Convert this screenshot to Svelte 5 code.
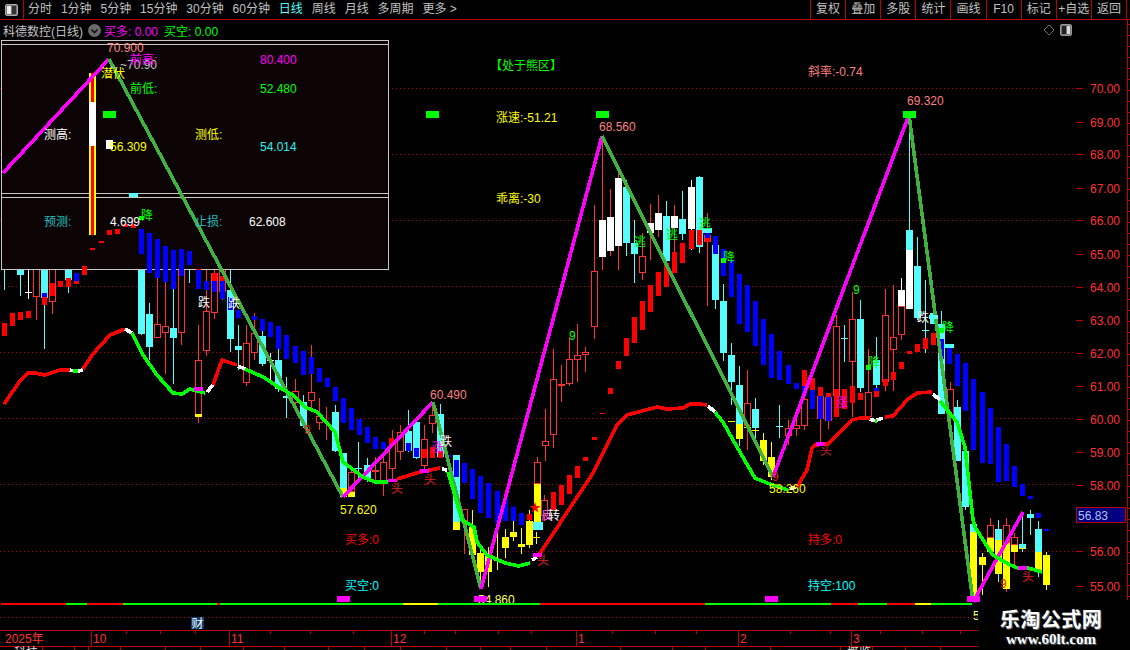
<script>
  const menu = [['分时'],['1分钟'],['5分钟'],['15分钟'],['30分钟'],['60分钟'],['日线',true],['周线'],['月线'],['多周期'],['更多 >']];
  const tools = ['复权','叠加','多股','统计','画线','F10','标记','+自选','返回'];
  const dots = [88,154,220,286,352,418,484,551,617];
  const RED='#ff0000', BLU='#0000ff', GRN='#00ff00';
  const kinds = { h:{s:'#ff3232',f:'#000',w:'#ff3232'}, c:{s:'#54fcfc',f:'#54fcfc',w:'#54fcfc'}, w:{s:'#fff',f:'#fff',w:'#ff3232'}, W:{s:'#fff',f:'#fff',w:'#fff'}, y:{s:'#ffff00',f:'#ffff00',w:'#ffff00'} };
  // left, high, low, bodyTop, bodyBottom, kind
  const candles = [
    [1,250,290,255,260,'c'],[17,250,296,262,275,'c'],[25,250,299,292,293,'W'],[33,250,320,255,297,'h'],[41,250,349,255,298,'c'],[49,250,314,255,302,'h'],[65,250,293,255,280,'c'],
    [138,260,335,262,334,'c'],[146,303,360,314,347,'c'],[154,262,338,324,338,'h'],[162,262,374,326,333,'h'],[170,262,384,328,338,'c'],[178,262,345,262,333,'h'],[186,262,283,262,265,'c'],
    [195,325,423,360,417,'h'],[203,262,356,311,351,'h'],[211,262,319,273,313,'h'],[219,262,300,262,292,'h'],[227,262,352,290,339,'c'],[235,325,370,346,350,'c'],[243,325,386,343,383,'h'],[251,313,360,333,353,'h'],[259,330,366,336,364,'c'],[267,353,383,360,361,'W'],[275,345,392,360,389,'c'],[283,377,418,396,398,'c'],[292,379,404,391,403,'h'],[300,395,428,402,426,'c'],[308,345,410,392,401,'h'],[316,398,430,416,423,'h'],[323,407,440,416,417,'h'],[332,405,452,412,451,'c'],[340,453,488,453,488,'c'],[348,466,492,472,492,'h'],[355,442,483,468,469,'c'],[364,458,482,465,480,'c'],[372,457,480,470,472,'h'],[380,455,496,462,482,'h'],[389,430,480,440,469,'h'],[397,425,460,432,452,'h'],
    [405,410,452,431,451,'c'],[413,425,459,422,458,'c'],[421,425,470,439,466,'h'],[429,402,433,415,424,'h'],[437,404,458,414,457,'c'],[453,455,530,455,522,'c'],[461,509,554,509,521,'h'],
    [469,510,556,527,555,'y'],[477,547,587,553,572,'y'],[485,547,587,553,572,'y'],[494,534,570,559,561,'y'],[502,529,558,537,548,'y'],[510,520,541,532,537,'y'],[518,528,554,544,547,'y'],[526,510,548,521,545,'y'],[534,457,484,462,484,'h'],[534,484,522,484,522,'y'],[533,532,544,537,538,'y'],
    [541,495,520,500,516,'h'],
    [542,409,461,441,446,'h'],[550,349,448,379,435,'h'],[558,365,402,384,386,'h'],[566,337,386,359,384,'h'],[574,324,382,355,360,'h'],[582,347,372,352,355,'h'],[591,205,339,271,327,'h'],
    [599,137,270,220,257,'w'],[607,189,256,217,251,'w'],[615,172,270,178,246,'w'],[623,180,256,187,243,'c'],[631,220,283,243,254,'c'],[639,233,280,256,273,'h'],[647,204,260,223,233,'w'],[655,195,237,213,230,'w'],[663,201,275,216,261,'c'],[671,205,270,216,228,'w'],[679,191,240,219,234,'c'],[688,180,250,187,229,'W'],[696,176,253,177,247,'c'],[704,213,306,235,242,'h'],
    [712,240,309,245,300,'c'],[720,284,361,301,353,'c'],[728,343,405,355,382,'c'],[736,366,446,385,424,'c'],[744,370,450,403,426,'h'],[752,398,440,409,428,'c'],[760,433,465,440,461,'y'],[768,442,480,457,477,'y'],[776,405,438,426,427,'c'],[785,420,445,428,436,'h'],[793,419,436,425,429,'h'],[801,375,430,399,426,'h'],[817,390,443,396,419,'h'],[825,395,429,397,421,'h'],[833,315,417,326,396,'h'],[841,325,362,338,339,'c'],[849,292,417,319,362,'h'],[857,300,392,319,388,'c'],[865,349,420,392,417,'h'],[873,337,392,360,385,'c'],[882,289,391,315,382,'h'],[890,285,391,337,350,'h'],[898,278,340,306,335,'h'],[898,278,306,290,306,'W'],[906,115,309,230,309,'c'],[914,237,320,266,318,'c'],[922,280,353,330,331,'c'],[930,313,324,313,324,'c'],[938,311,414,324,414,'c'],[947,382,415,389,415,'h'],[954,400,461,407,461,'c'],[962,451,510,451,507,'c'],
    [970,520,600,524,599,'c'],[979,553,595,557,565,'y'],[987,518,555,525,538,'h'],[995,520,582,529,540,'c'],[1003,518,592,525,543,'h'],[1011,533,567,537,545,'h'],[1019,513,552,544,548,'c'],[1027,510,535,514,518,'c'],[1035,521,577,529,552,'c'],[1043,552,590,555,585,'y']
  ];
  // left, top, bottom, color, width (overpaint on candles, under the ribbon blocks)
  const fills = [
    [970,532,599,'#ffff00',7],[987,538,552,'#ffff00',7],[995,540,574,'#ffff00',7],[1003,543,589,'#ffff00',7],[1011,545,552,'#ffff00',7],[1035,552,572,'#ffff00',7],[1019,548,549,'#ffff00',7],
    [736,424,439,'#ffff00',7],[728,421,422,'#ffff00',7],[744,427,428,'#ffff00',7],[752,430,431,'#ffff00',7],[340,488,497,'#ffff00',7],[348,492,497,'#ffff00',7],[453,522,530,'#ffff00',7],
    [461,521,522,'#ffff00',7],[533,522,530,'#54fcfc',10],[195,414,417,'#ffff00',7],[697,230,245,RED,5],[705,236,242,RED,5],[906,250,309,'#fff',7]
  ];
  const blocks = [
    [2,323,336,RED],[10,313,326,RED],[18,312,320,RED],[26,311,318,RED],[42,293,297,BLU],[42,297,305,RED],[50,283,296,RED],[58,281,287,RED],[66,278,287,RED],[74,273,281,BLU],[74,281,284,RED],[82,266,275,RED],[90,248,250,RED],[99,241,243,RED],[107,230,235,RED],[115,229,234,RED],[123,224,227,RED],[131,224,228,RED],[139,216,220,GRN],
    [139,229,254,BLU],[147,233,273,BLU],[155,239,278,BLU],[163,246,282,BLU],[171,250,289,BLU],[179,249,276,BLU],[187,251,265,BLU],[196,270,289,BLU],[196,269,270,RED],[204,281,290,BLU],[212,273,281,RED],[212,281,292,BLU],[220,276,281,RED],[220,281,299,BLU],[228,297,310,BLU],[236,310,318,BLU],[244,317,318,BLU],[252,316,320,BLU],[260,319,331,BLU],[268,322,337,BLU],[276,326,349,BLU],[284,335,359,BLU],[293,346,363,BLU],[301,351,375,BLU],[309,357,374,BLU],[317,368,382,BLU],[325,378,387,BLU],[333,387,401,BLU],[341,398,423,BLU],[349,408,430,BLU],[357,419,435,BLU],[365,427,443,BLU],[373,437,449,BLU],[381,442,449,BLU],[389,438,445,RED],[406,443,451,BLU],[414,448,457,BLU],[422,449,458,RED],[430,447,458,RED],[438,451,458,RED],[446,455,457,BLU],
    [454,460,477,BLU],[462,463,483,BLU],[470,469,499,BLU],[478,476,513,BLU],[486,483,518,BLU],[495,491,523,BLU],[503,500,521,BLU],[511,507,521,BLU],[519,513,525,BLU],[527,514,520,RED],
    [551,492,510,RED],[559,485,505,RED],[567,475,494,RED],[575,466,478,RED],[583,457,461,RED],[592,437,440,RED],[600,413,414,RED],[608,388,394,RED],[616,361,369,RED],[624,338,356,RED],[632,317,343,RED],[640,301,330,RED],[648,285,312,RED],[656,272,296,RED],[664,263,287,RED],[672,252,273,RED],[680,243,263,RED],[689,230,249,RED],
    [705,233,238,BLU],[713,236,254,BLU],[721,249,276,BLU],[721,258,263,GRN],[729,260,297,BLU],[737,274,324,BLU],[745,285,332,BLU],[753,301,346,BLU],[761,319,365,BLU],[769,334,378,BLU],[777,351,380,BLU],[786,365,384,BLU],[794,383,389,BLU],[802,370,386,RED],[802,386,396,BLU],[810,378,390,RED],[810,390,409,BLU],[818,387,396,RED],[818,396,419,BLU],[826,393,397,RED],[826,397,421,BLU],[834,389,417,RED],[842,389,409,RED],[850,386,403,RED],[858,393,400,RED],[866,365,370,GRN],[874,388,391,BLU],[874,391,397,RED],[883,379,386,RED],[891,372,380,RED],[899,362,369,RED],[907,351,354,RED],[915,344,352,RED],[923,338,349,RED],[931,333,345,RED],[939,328,333,GRN],
    [939,339,359,BLU],[947,344,364,BLU],[955,354,386,BLU],[963,363,411,BLU],[971,379,450,BLU],[980,392,463,BLU],[988,408,464,BLU],[996,427,482,BLU],[1004,444,481,BLU],[1012,466,487,BLU],[1020,484,496,BLU],[1028,496,499,BLU],[1036,513,518,BLU],[1044,529,531,BLU]
  ];
  const flats = [
    [129,193,9,4,'#54fcfc'],[703,228,9,5,'#54fcfc'],[929,315,9,4,'#54fcfc'],[945,344,9,4,'#54fcfc'],
    [103,111,13,7,GRN],[426,111,13,7,GRN],[596,111,13,7,GRN],[903,111,13,7,GRN],
    [194,387,9,4,'#ff00ff'],[388,479,9,3,'#ff00ff'],[420,469,9,4,'#ff00ff'],[533,553,9,4,'#ff00ff'],[816,442,9,4,'#ff00ff'],[1018,566,9,4,'#ff00ff'],
    [337,596,13,6,'#ff00ff'],[474,596,13,6,'#ff00ff'],[765,596,13,6,'#ff00ff'],[967,596,13,6,'#ff00ff'],
    [106,140,7,9,'#fff']
  ];
  const zig = [
    ['#ff00ff','3,173 109,59'],['#3fb23f','109,59 343,497'],['#ff00ff','343,497 433,402'],['#3fb23f','433,402 481,589'],['#ff00ff','481,589 602,136'],['#3fb23f','602,136 773,477'],['#ff00ff','773,477 909,115'],['#3fb23f','909,115 973,602'],['#ff00ff','973,602 1023,512']
  ];
  const curve = [
    [RED,'4,404 20,381 28,373 35,373 45,375 60,370 70,370'],['#fff','70,370 73,371'],[GRN,'73,371 78,371'],['#fff','78,371 83,370'],
    [RED,'83,369 92,355 110,335 125,329'],['#fff','125,329 132,333'],[GRN,'132,333 143,355 157,375 173,393 182,394 190,389 205,393'],['#fff','207,392 213,385'],
    [RED,'213,385 222,360 237,365'],['#fff','238,366 245,369'],[GRN,'245,369 263,377 280,388 293,395 305,407 317,412 335,432 343,462 363,477 375,482 388,482'],
    [RED,'397,479 420,472 440,468'],['#fff','442,469 447,470'],[GRN,'448,472 462,520 474,527 477,542 487,555 505,563 519,566 530,563'],['#fff','532,560 537,557'],
    [RED,'539,555 562,520 593,473 617,425 627,415 657,407 667,409 683,408 690,404 700,404 707,405'],['#fff','708,406 715,412'],[GRN,'715,412 723,422 737,447 755,478 767,483 788,490'],['#fff','790,489 795,487'],
    [RED,'797,487 807,470 812,448 815,445 828,444 852,420 860,418 870,418'],['#fff','870,419 875,421'],[GRN,'875,421 877,421'],['#fff','877,420 883,418'],
    [RED,'885,417 893,416 907,400 917,393 932,392'],['#fff','933,394 940,400'],[GRN,'940,401 957,422 965,447 973,520 975,527 985,543 993,555 1010,565 1018,568 1028,568 1042,572']
  ];
  const base = [[1,66,RED],[66,87,GRN],[87,123,RED],[123,217,GRN],[217,220,RED],[220,403,GRN],[403,438,'#ffff00'],[438,540,GRN],[540,705,RED],[705,831,GRN],[831,858,RED],[858,887,GRN],[887,915,RED],[915,931,'#ffff00'],[931,972,GRN]];
  // x, center y, text, color
  const under = [[478,599,'54.860','#ffff66'],[973,615,'55.120','#ffff66']];
  const panelText = [
    [107,47,'70.900','#ff8c8c'],[108,64,'←~70.90','#c8c8c8'],[130,59,'前高:','#ff00ff'],[260,59,'80.400','#ff00ff'],
    [101,73,'潜伏','#ffff00'],[130,88,'前低:',GRN],[260,88,'52.480',GRN],
    [44,134,'测高:','#fff'],[195,134,'测低:','#ffff00'],[110,146,'56.309','#ffff00'],[260,146,'54.014','#2cf0f0'],
    [44,221,'预测:','#1fc0c0'],[110,221,'4.699','#fff'],[195,221,'止损:','#1fc0c0'],[249,221,'62.608','#fff']
  ];
  const labels = [
    [490,65,'【处于熊区】',GRN],[496,117,'涨速:-51.21','#ffff00'],[496,198,'乖离:-30','#ffff00'],[808,71,'斜率:-0.74','#ff8080'],
    [430,394,'60.490','#ff8080'],[599,126,'68.560','#ff8080'],[907,100,'69.320','#ff8080'],[340,509,'57.620','#ffff00'],[769,488,'58.260','#ffff00'],
    [345,539,'买多:0','#ff0000'],[345,585,'买空:0','#00ffff'],[808,539,'持多:0','#ff0000'],[808,585,'持空:100','#00ffff'],
    [198,302,'跌','#fff'],[228,303,'跌','#fff'],[432,447,'涨','#ff00ff'],[440,441,'跌','#fff'],[836,402,'涨','#ff00ff'],[917,317,'跌','#fff'],
    [141,215,'降',GRN],[723,257,'降',GRN],[868,362,'降',GRN],[942,327,'降',GRN],[634,241,'逃',GRN],[666,234,'逃',GRN],[699,223,'逃',GRN],
    [569,335,'9',GRN],[853,289,'9',GRN],[304,429,'9','#e02020'],[772,476,'9','#e02020'],[1000,583,'9','#e02020'],
    [391,488,'头','#e02020'],[424,479,'头','#e02020'],[537,560,'头','#e02020'],[820,450,'头','#c02020'],[1022,576,'头','#e02020'],
    [529,507,'★','#ff0000'],[541,515,'反','#ff60ff'],[548,515,'转','#fff']
  ];
  const prices = [[70,88],[69,122],[68,154],[67,188],[66,220],[65,254],[64,287],[63,320],[62,353],[61,386],[60,419],[59,452],[58,485],[56,551],[55,586]];
  const minor = Array.from({length:53},(_,i)=>24+i*11);
  const months = [[91,'10'],[229,'11'],[391,'12'],[576,'1'],[738,'2'],[851,'3']];
  const upTicks = [126,160,195,270,310,353,424,455,498,531,612,655,696,790,830,880,922,960];
  const downTicks = [42,74,88,120,165,200,243,284,328,364,400,446,480,510,546,620,672,705,770,840,872,905,940];
</script>

<div class="screen">
  <header class="topbar">
    <div class="winbox">
      <svg width="13" height="12" viewBox="0 0 13 12"><rect x="0.5" y="0.5" width="12" height="11" rx="1.5" fill="#777" stroke="#aaa"/><rect x="2" y="2" width="4" height="8" fill="#eee"/><rect x="7" y="2" width="4" height="8" fill="#333"/></svg>
    </div>
    <nav class="menu">
      {#each menu as m}<span class:active={m[1]}>{m[0]}</span>{/each}
    </nav>
    <div class="tools">
      {#each tools as t}<span>{t}</span>{/each}
    </div>
  </header>

  <div class="body">
    <div class="chartcol">
      <div class="infobar">
        <span class="title">科德数控(日线)</span>
        <svg class="chev" width="13" height="13" viewBox="0 0 13 13"><circle cx="6.5" cy="6.5" r="6.5" fill="#6a6a6a"/><path d="M3.5 5.5 L6.5 8.5 L9.5 5.5" fill="none" stroke="#111" stroke-width="1.6"/></svg>
        <span class="pink">买多: 0.00</span>
        <span class="lime">买空: 0.00</span>
        <span class="spacer"></span>
        <svg width="12" height="12" viewBox="0 0 12 12"><path d="M6 1 L11 6 L6 11 L1 6 Z" fill="none" stroke="#777"/></svg>
        <svg class="panelicon" width="12" height="12" viewBox="0 0 12 12"><rect x="0.5" y="0.5" width="11" height="11" rx="1.5" fill="#777" stroke="#999"/><rect x="2" y="2" width="4" height="8" fill="#222"/><rect x="7" y="2" width="3" height="8" fill="#ddd"/></svg>
      </div>

      <svg class="chart" width="1076" height="590" viewBox="0 40 1076 590">
        {#each dots as y}<line class="dot" x1="0" x2="1076" y1={y+0.5} y2={y+0.5}/>{/each}

        {#each candles as [l,hi,lo,top,bot,k]}
          <rect class="px" x={l+3} y={hi} width="1" height={lo-hi} fill={kinds[k].w}/>
          {#if k==='h'}
            <rect class="px" x={l+0.5} y={top+0.5} width="6" height={Math.max(bot-top-1,0)} fill="#000" stroke={kinds[k].s}/>
          {:else}
            <rect class="px" x={l} y={top} width="7" height={Math.max(bot-top,1)} fill={kinds[k].f}/>
          {/if}
        {/each}
        {#each fills as [x,a,b,c,w]}<rect class="px" x={x} y={a} width={w} height={b-a} fill={c}/>{/each}

        <rect class="px" x="1.5" y="40.5" width="387" height="229" fill="#0c0404" stroke="#c8c8c8"/>
        <line class="pl" x1="2" x2="388" y1="44.5" y2="44.5"/>
        <line class="pl" x1="2" x2="388" y1="193.5" y2="193.5"/>
        <line class="pl" x1="2" x2="388" y1="197.5" y2="197.5"/>

        {#each blocks as [l,a,b,c]}<rect class="px" x={l} y={a} width="5" height={b-a} fill={c}/>{/each}

        <rect class="px" x="89" y="73" width="7" height="162" fill="#ffff00"/>
        <rect class="px" x="91" y="73" width="3" height="162" fill="#ff0000"/>
        <rect class="px" x="89" y="102" width="7" height="44" fill="#fff"/>

        {#each under as [x,y,t,c]}<text x={x} y={y+4.5} fill={c}>{t}</text>{/each}

        {#each zig as [c,p]}<polyline class="thick" points={p} stroke={c}/>{/each}
        {#each curve as [c,p]}<polyline class="thick" points={p} stroke={c}/>{/each}

        {#each base as [a,b,c]}<rect class="px" x={a} y="603" width={b-a} height="2" fill={c}/>{/each}
        {#each flats as [x,y,w,h,c]}<rect class="px" x={x} y={y} width={w} height={h} fill={c}/>{/each}

        {#each panelText as [x,y,t,c]}<text x={x} y={y+4.5} fill={c}>{t}</text>{/each}
        {#each labels as [x,y,t,c]}<text x={x} y={y+4.5} fill={c}>{t}</text>{/each}

        <rect class="px" x="191" y="617" width="13" height="12" fill="#0c3c6c"/>
        <text x="191.5" y="627.5" fill="#fff">财</text>
      </svg>
    </div>

    <svg class="axis" width="54" height="610" viewBox="1076 20 54 610">
      <rect class="px" x="1075" y="20" width="1" height="580" fill="#c00000"/>
      <rect class="px" x="1127" y="20" width="1" height="580" fill="#c00000"/>
      {#each minor as y}<rect class="px" x="1127" y={y} width="3" height="1" fill="#c00000"/>{/each}
      {#each prices as [p,y]}
        <rect class="px" x="1076" y={y} width="7" height="1" fill="#c00000"/>
        <text class="price" x="1120" y={y+4.5} text-anchor="end">{p}.00</text>
      {/each}
      <rect class="px" x="1076.5" y="507.5" width="49" height="15" fill="#000080" stroke="#c00000"/>
      <text class="last" x="1078" y="519.5">56.83</text>
    </svg>
  </div>

  <footer class="timeline">
    <svg width="978" height="20" viewBox="0 630 978 20">
      <rect class="px" x="0" y="630" width="978" height="1" fill="#c00000"/>
      <rect class="px" x="0" y="646" width="978" height="1" fill="#c00000"/>
      <text class="price" x="5" y="643">2025年</text>
      {#each months as [x,t]}
        <rect class="px" x={x} y="630" width="1" height="16" fill="#c00000"/>
        <text class="price" x={x+2} y="643">{t}</text>
      {/each}
      {#each upTicks as x}<rect class="px" x={x} y="631" width="1" height="3" fill="#c00000"/>{/each}
      {#each downTicks as x}<rect class="px" x={x} y="647" width="1" height="3" fill="#c00000"/>{/each}
      <text class="clip" x="14" y="657" fill="#ddd">科技</text>
      <text class="clip" x="847" y="657" fill="#ddd">概览</text>
    </svg>
  </footer>

  <aside class="watermark">
    <strong>乐淘公式网</strong>
    <em>www.60lt.com</em>
  </aside>
</div>

<style>
  :global(body) { margin: 0; background: #000; }
  .screen {
    position: relative;
    width: 1130px;
    height: 650px;
    background: #000;
    overflow: hidden;
    font: 12px "Liberation Sans", "Noto Sans CJK SC", sans-serif;
    color: #c0c0c0;
  }
  .topbar {
    display: flex;
    align-items: center;
    height: 19px;
    border-bottom: 1px solid #b80000;
    padding-right: 3px;
  }
  .winbox {
    display: flex;
    align-items: center;
    justify-content: center;
    box-sizing: border-box;
    width: 24px;
    height: 19px;
    border-right: 1px solid #b80000;
  }
  .menu { display: flex; gap: 8.9px; padding-left: 4px; line-height: 19px; }
  .menu .active { color: #54fcfc; }
  .tools {
    display: grid;
    grid-template-columns: repeat(9, 1fr);
    width: 317px;
    margin-left: auto;
    border-right: 1px solid #b80000;
    box-sizing: border-box;
  }
  .tools span {
    border-left: 1px solid #b80000;
    text-align: center;
    line-height: 19px;
    white-space: nowrap;
  }
  .body { display: flex; height: 610px; }
  .chartcol { width: 1076px; }
  .infobar {
    display: flex;
    align-items: center;
    height: 20px;
    padding: 0 4px 0 3px;
    box-sizing: border-box;
  }
  .title { margin-right: 5px; }
  .chev { margin-right: 3px; }
  .pink { color: #ff00ff; margin-right: 6px; }
  .lime { color: #00ff00; }
  .spacer { flex: 1; }
  .panelicon { margin-left: 5px; }
  svg { display: block; }
  .chart text, .axis text, .timeline text {
    font: 12px "Liberation Sans", "Noto Sans CJK SC", sans-serif;
  }
  .px { shape-rendering: crispEdges; }
  .dot { stroke: #b00000; stroke-dasharray: 1 3; shape-rendering: crispEdges; }
  .pl { stroke: #c8c8c8; shape-rendering: crispEdges; }
  .thick { fill: none; stroke-width: 3.6; stroke-linejoin: round; shape-rendering: crispEdges; }
  .axis text.price, .timeline text.price { fill: #ff3232; }
  .axis text.last { fill: #b0c4f0; }
  .timeline { height: 20px; overflow: hidden; }
  .watermark {
    position: absolute;
    left: 978px;
    top: 602px;
    width: 146px;
    height: 48px;
    padding-right: 6px;
    background: #000;
    display: flex;
    flex-direction: column;
    align-items: center;
    color: #fff;
  }
  .watermark strong {
    font: 700 20px/24px "Noto Sans CJK SC", sans-serif;
    letter-spacing: 0.5px;
    margin-top: 5px;
    text-shadow: 1px 1px 1px #777;
  }
  .watermark em {
    font: 700 15px/17px "Liberation Serif", serif;
    text-shadow: 1px 1px 1px #666;
  }
</style>
